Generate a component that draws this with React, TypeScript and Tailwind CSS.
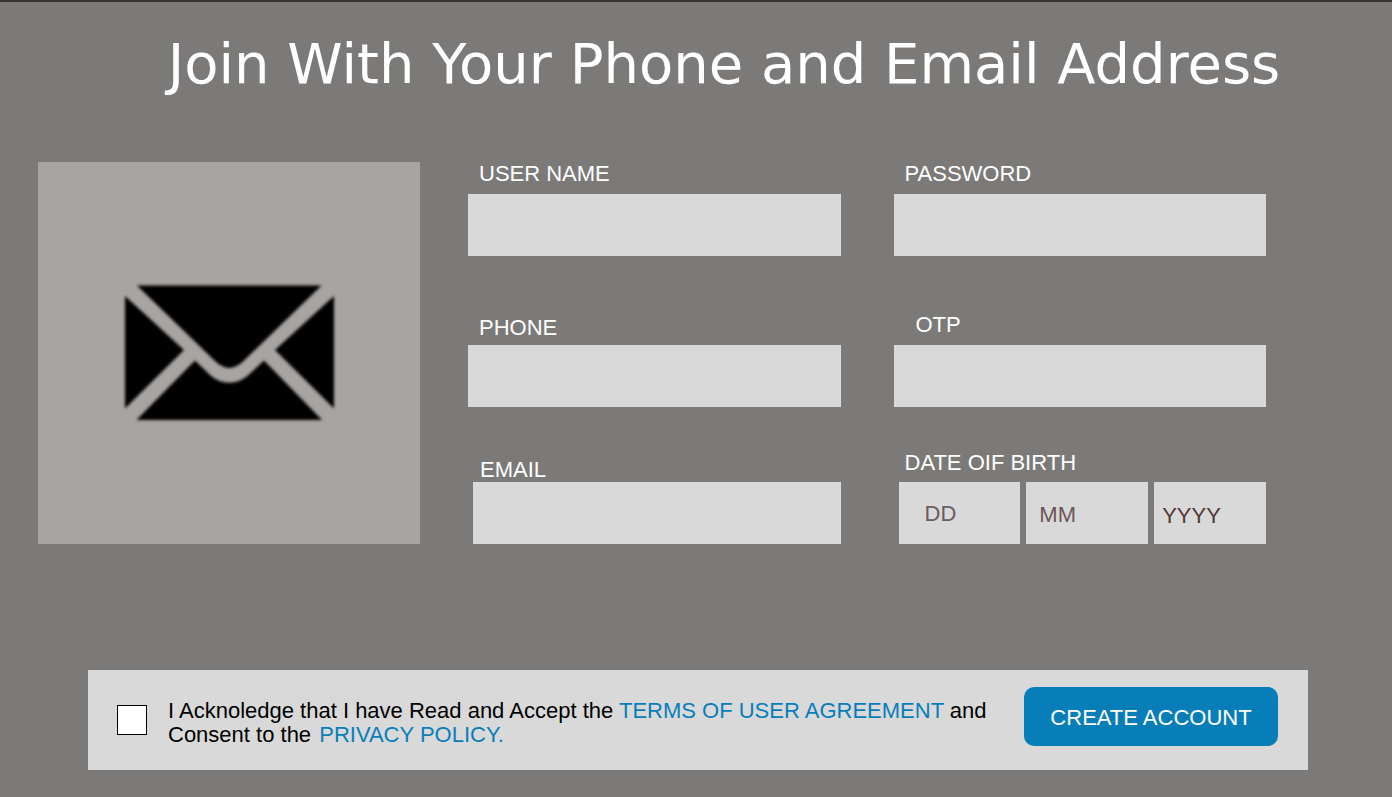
import React from "react";

type FieldProps = {
  id: string;
  label: string;
  type?: string;
  className?: string;
  labelClass?: string;
};

const labelBase = "block text-[22px] leading-6 text-white";
const inputBase = "block h-[62px] w-full min-w-0 bg-[#d9d9d9] text-[22px] text-black outline-none";

function Field({ id, label, type = "text", className = "", labelClass = "" }: FieldProps) {
  return (
    <div className={className}>
      <label htmlFor={id} className={`${labelBase} ${labelClass}`}>
        {label}
      </label>
      <input id={id} name={id} type={type} className={`${inputBase} px-3`} />
    </div>
  );
}

function Envelope() {
  return (
    <svg
      viewBox="0 0 210 136"
      className="h-[136px] w-[210px] overflow-visible blur-[1.5px]"
      fill="#000"
      role="img"
      aria-label="Email"
    >
      <path d="M13 0.5H197.5L119 76.5Q112 83 105.300 83Q98.500 83 91.500 76.500Z" />
      <path d="M1 11L60 65L1 123.500Z" />
      <path d="M210 11L151 65L210 123.500Z" />
      <path d="M12.500 135L71 75.500L86 90Q94.500 97.700 105.300 97.700Q116 97.700 124.500 90L140 75.500L198 135Z" />
    </svg>
  );
}

export default function App() {
  return (
    <main className="min-h-screen border-t-2 border-[#363432] bg-[#7c7a78] pb-6 font-['Liberation_Sans',Arial,sans-serif]">
      <h1 className="pt-8 pl-14 text-center font-['DejaVu_Sans',sans-serif] text-[56px] leading-[60px] whitespace-nowrap text-white">
        Join With Your Phone and Email Address
      </h1>

      <form onSubmit={(e) => e.preventDefault()}>
        <div className="mt-[68px] flex gap-12 pr-[126px] pl-[38px]">
          <div className="flex h-[382px] w-[382px] shrink-0 items-center justify-center bg-[#a8a4a2]">
            <Envelope />
          </div>

          <div className="grid min-w-0 flex-1 grid-cols-2 content-end items-end gap-x-[53px] gap-y-[42px]">
            <Field id="username" label="USER NAME" labelClass="mb-2 pl-[11px]" />
            <Field id="password" label="PASSWORD" type="password" labelClass="mb-2 pl-[11px]" />
            <Field id="phone" label="PHONE" type="tel" className="mt-[15px]" labelClass="mb-[5px] pl-[11px]" />
            <Field id="otp" label="OTP" className="mt-[15px]" labelClass="mb-2 pl-[22px]" />
            <Field id="email" label="EMAIL" type="email" className="pl-[5px]" labelClass="pl-[7px]" />
            <fieldset className="min-w-0 pt-[2px] pl-[5px]">
              <legend className={`${labelBase} pt-[2px] pl-[6px]`}>DATE OIF BIRTH</legend>
              <div className="mt-[5px] grid grid-cols-[122fr_122fr_112fr] gap-[6px]">
                <input
                  aria-label="Day"
                  placeholder="DD"
                  className={`${inputBase} pt-[2px] pl-[26px] placeholder:text-[#6b5c5f]`}
                />
                <input
                  aria-label="Month"
                  placeholder="MM"
                  className={`${inputBase} pt-[4px] pl-[13px] placeholder:text-[#6b5656]`}
                />
                <input
                  aria-label="Year"
                  placeholder="YYYY"
                  className={`${inputBase} pt-[6px] pl-2 placeholder:text-[#4f3835]`}
                />
              </div>
            </fieldset>
          </div>
        </div>

        <div className="mt-[126px] mr-[84px] ml-[88px] flex min-h-[100px] items-center bg-[#d9d9d9] pr-[30px] pl-[29px]">
          <input
            id="agree"
            type="checkbox"
            className="size-[30px] shrink-0 appearance-none border border-black bg-white checked:bg-[#087eb9]"
          />
          <p className="pt-[6px] pl-[21px] text-[22px] leading-6 whitespace-nowrap text-black">
            <label htmlFor="agree">I Acknoledge that I have Read and Accept the </label>
            <a href="#terms" className="text-[#087eb9]">TERMS OF USER AGREEMENT</a> and
            <br />
            Consent to the{" "}
            <a href="#privacy" className="pl-[2px] text-[#087eb9]">PRIVACY POLICY.</a>
          </p>
          <button
            type="submit"
            className="mb-[7px] ml-auto h-[59px] w-[254px] shrink-0 rounded-[10px] bg-[#087eb9] pt-[2px] text-[22px] whitespace-nowrap text-white"
          >
            CREATE ACCOUNT
          </button>
        </div>
      </form>
    </main>
  );
}
